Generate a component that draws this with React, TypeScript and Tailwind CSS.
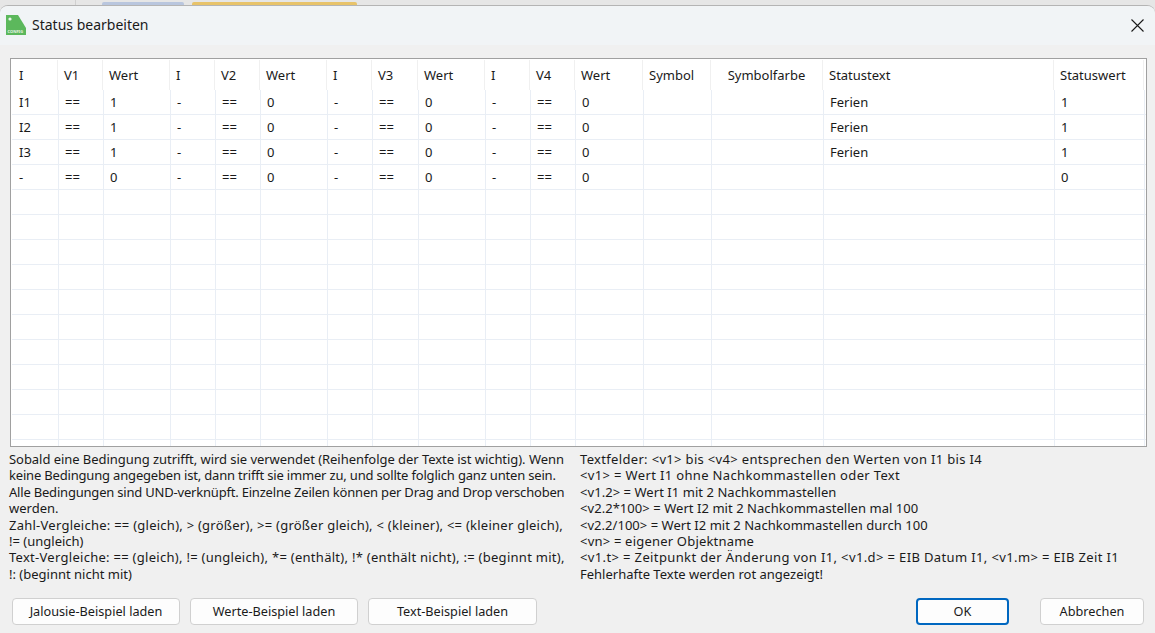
const columns = [
  { label: 'I', width: 'w-[46px]' },
  { label: 'V1', width: 'w-[45px]' },
  { label: 'Wert', width: 'w-[67px]' },
  { label: 'I', width: 'w-[45px]' },
  { label: 'V2', width: 'w-[45px]' },
  { label: 'Wert', width: 'w-[67px]' },
  { label: 'I', width: 'w-[45px]' },
  { label: 'V3', width: 'w-[46px]' },
  { label: 'Wert', width: 'w-[67px]' },
  { label: 'I', width: 'w-[45px]' },
  { label: 'V4', width: 'w-[45px]' },
  { label: 'Wert', width: 'w-[68px]' },
  { label: 'Symbol', width: 'w-[68px]' },
  { label: 'Symbolfarbe', width: 'w-[112px]', center: true },
  { label: 'Statustext', width: 'w-[231px]' },
  { label: 'Statuswert', width: 'w-[90px]' },
];

const filled = [
  ['I1', '==', '1', '-', '==', '0', '-', '==', '0', '-', '==', '0', '', '', 'Ferien', '1'],
  ['I2', '==', '1', '-', '==', '0', '-', '==', '0', '-', '==', '0', '', '', 'Ferien', '1'],
  ['I3', '==', '1', '-', '==', '0', '-', '==', '0', '-', '==', '0', '', '', 'Ferien', '1'],
  ['-', '==', '0', '-', '==', '0', '-', '==', '0', '-', '==', '0', '', '', '', '0'],
];
const rows = [...filled, ...Array.from({ length: 11 }, () => Array(16).fill(''))];

function DialogButton({ label, width, primary }: { label: string; width: string; primary?: boolean }) {
  return (
    <button
      className={`${width} h-[27px] rounded-[4px] bg-[#fdfdfd] text-[12.7px] text-[#1a1a1a] ${
        primary ? 'border-2 border-[#0067c0]' : 'border border-[#d0d0d0]'
      }`}
    >
      {label}
    </button>
  );
}

export default function App() {
  return (
    <div className="h-[633px] w-[1155px] overflow-hidden bg-[#e6e6e6] font-['Noto_Sans',sans-serif] text-[13px] text-[#1a1a1a]">
      {/* Tabs behind the dialog */}
      <div className="flex h-[5px] items-end">
        <div className="ml-[75px] h-[5px] w-px bg-[#d0d0d0]" />
        <div className="ml-[26px] h-[3px] w-[82px] rounded-t-[2px] bg-[#b9c6de]" />
        <div className="ml-[8px] h-[3px] w-[165px] rounded-t-[2px] bg-[#e8c36a]" />
      </div>

      <div className="h-[628px] overflow-hidden rounded-t-[8px] border-t border-[#b4b4b4] bg-[#f0f0f0]">
        {/* Title bar */}
        <div className="flex h-[39px] items-center bg-[#f1f4f6] pl-[6px] pr-[11px]">
          <svg width="20" height="20" viewBox="0 0 20 20" className="mb-[2px]">
            <path d="M0 0H12L20 13V20H0Z" fill="#5cb85c" />
            <circle cx="4" cy="4" r="1.6" fill="#e8f5e8" />
            <text x="1.5" y="18" fontSize="4" fontWeight="700" fill="#e8f5e8">CONFIG</text>
          </svg>
          <span className="mb-[2px] ml-[6px] text-[14px] leading-none">Status bearbeiten</span>
          <svg width="13" height="13" viewBox="0 0 13 13" className="mb-[1px] ml-auto">
            <path d="M0.5 0.5L12.5 12.5M12.5 0.5L0.5 12.5" stroke="#1a1a1a" strokeWidth="1.1" />
          </svg>
        </div>

        <div className="px-[10px] pt-[13px]">
          {/* Grid */}
          <div className="h-[389px] w-[1137px] overflow-hidden border border-[#a0a0a0] bg-white pl-[1px] pt-[1px]">
            <div className="flex h-[30px]">
              {columns.map((c, i) => (
                <div
                  key={i}
                  className={`${c.width} flex shrink-0 items-center border-r border-[#f0f0f0] pt-[2px] ${
                    c.center ? 'justify-center' : i === 0 ? 'pl-[7px]' : 'pl-[6px]'
                  }`}
                >
                  {c.label}
                </div>
              ))}
            </div>
            {rows.map((row, r) => (
              <div key={r} className="flex h-[25px] border-b border-[#e9eef5]">
                {row.map((cell: string, i: number) => (
                  <div
                    key={i}
                    className={`${columns[i].width} ${i === 0 ? 'w-[47px] pl-[7px]' : 'pl-[6px]'} ${
                      i === 1 ? 'w-[44px]' : ''
                    } flex shrink-0 items-center border-r border-[#e9eef5] pt-[2px]`}
                  >
                    {cell}
                  </div>
                ))}
              </div>
            ))}
          </div>

          {/* Help text */}
          <div className="mt-[4px] flex leading-[16.4px]">
            <div className="-ml-px w-[571px] shrink-0">
              <p className="tracking-[-0.05px]">Sobald eine Bedingung zutrifft, wird sie verwendet (Reihenfolge der Texte ist wichtig). Wenn</p>
              <p className="tracking-[-0.18px]">keine Bedingung angegeben ist, dann trifft sie immer zu, und sollte folglich ganz unten sein.</p>
              <p className="tracking-[-0.2px]">Alle Bedingungen sind UND-verknüpft. Einzelne Zeilen können per Drag and Drop verschoben</p>
              <p>werden.</p>
              <p className="tracking-[0.25px]">Zahl-Vergleiche: == (gleich), &gt; (größer), &gt;= (größer gleich), &lt; (kleiner), &lt;= (kleiner gleich),</p>
              <p>!= (ungleich)</p>
              <p className="tracking-[0.28px]">Text-Vergleiche: == (gleich), != (ungleich), *= (enthält), !* (enthält nicht), := (beginnt mit),</p>
              <p>!: (beginnt nicht mit)</p>
            </div>
            <div>
              <p className="tracking-[0.33px]">Textfelder: &lt;v1&gt; bis &lt;v4&gt; entsprechen den Werten von I1 bis I4</p>
              <p className="tracking-[0.35px]">&lt;v1&gt; = Wert I1 ohne Nachkommastellen oder Text</p>
              <p className="tracking-[0.05px]">&lt;v1.2&gt; = Wert I1 mit 2 Nachkommastellen</p>
              <p className="tracking-[0.05px]">&lt;v2.2*100&gt; = Wert I2 mit 2 Nachkommastellen mal 100</p>
              <p className="tracking-[0.03px]">&lt;v2.2/100&gt; = Wert I2 mit 2 Nachkommastellen durch 100</p>
              <p className="tracking-[0.2px]">&lt;vn&gt; = eigener Objektname</p>
              <p className="tracking-[0.37px]">&lt;v1.t&gt; = Zeitpunkt der Änderung von I1, &lt;v1.d&gt; = EIB Datum I1, &lt;v1.m&gt; = EIB Zeit I1</p>
              <p>Fehlerhafte Texte werden rot angezeigt!</p>
            </div>
          </div>

          {/* Buttons */}
          <div className="mt-[16px] flex pl-[2px] pr-[1px]">
            <div className="flex gap-[10px]">
              <DialogButton label="Jalousie-Beispiel laden" width="w-[168px]" />
              <DialogButton label="Werte-Beispiel laden" width="w-[168px]" />
              <DialogButton label="Text-Beispiel laden" width="w-[169px]" />
            </div>
            <div className="ml-auto flex gap-[31px]">
              <DialogButton label="OK" width="w-[93px]" primary />
              <DialogButton label="Abbrechen" width="w-[104px]" />
            </div>
          </div>
        </div>
      </div>
    </div>
  );
}
